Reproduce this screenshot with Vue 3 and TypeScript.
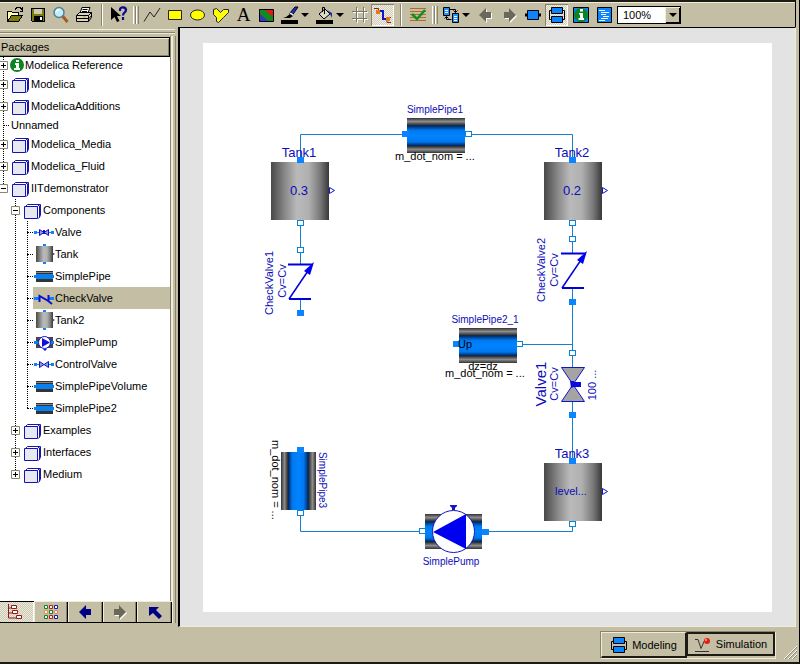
<script setup lang="ts">
import { computed, ref } from 'vue'

type IconKind = 'info' | 'folder' | 'valve' | 'tank' | 'pipe' | 'check' | 'pump' | 'control' | 'none'

interface TreeNode {
  id: string
  label: string
  icon: IconKind
  children?: TreeNode[]
}

interface TreeRow {
  node: TreeNode
  depth: number
  last: boolean
  guides: boolean[]
}

interface Label {
  text: string
  x: number
  y: number
  size?: number
  turn?: number
  anchor?: 'start' | 'middle'
  dark?: boolean
}

const packages: TreeNode[] = [
  { id: 'ref', label: 'Modelica Reference', icon: 'info', children: [] },
  { id: 'modelica', label: 'Modelica', icon: 'folder', children: [] },
  { id: 'additions', label: 'ModelicaAdditions', icon: 'folder', children: [] },
  { id: 'unnamed', label: 'Unnamed', icon: 'none' },
  { id: 'media', label: 'Modelica_Media', icon: 'folder', children: [] },
  { id: 'fluid', label: 'Modelica_Fluid', icon: 'folder', children: [] },
  {
    id: 'iit',
    label: 'IITdemonstrator',
    icon: 'folder',
    children: [
      {
        id: 'components',
        label: 'Components',
        icon: 'folder',
        children: [
          { id: 'valve', label: 'Valve', icon: 'valve' },
          { id: 'tank', label: 'Tank', icon: 'tank' },
          { id: 'pipe', label: 'SimplePipe', icon: 'pipe' },
          { id: 'check', label: 'CheckValve', icon: 'check' },
          { id: 'tank2', label: 'Tank2', icon: 'tank' },
          { id: 'pump', label: 'SimplePump', icon: 'pump' },
          { id: 'control', label: 'ControlValve', icon: 'control' },
          { id: 'volume', label: 'SimplePipeVolume', icon: 'pipe' },
          { id: 'pipe2', label: 'SimplePipe2', icon: 'pipe' },
        ],
      },
      { id: 'examples', label: 'Examples', icon: 'folder', children: [] },
      { id: 'interfaces', label: 'Interfaces', icon: 'folder', children: [] },
      { id: 'medium', label: 'Medium', icon: 'folder', children: [] },
    ],
  },
]

const open = ref<Set<string>>(new Set(['iit', 'components']))
const selected = ref('check')
const zoom = ref('100%')

function toggle(id: string) {
  const next = new Set(open.value)
  if (next.has(id)) next.delete(id)
  else next.add(id)
  open.value = next
}

function flatten(nodes: TreeNode[], depth: number, guides: boolean[]): TreeRow[] {
  return nodes.flatMap((node, i) => {
    const last = i === nodes.length - 1
    const row: TreeRow = { node, depth, last, guides }
    const kids = node.children && open.value.has(node.id) ? flatten(node.children, depth + 1, [...guides, !last]) : []
    return [row, ...kids]
  })
}

const rows = computed(() => flatten(packages, 0, []))

const labels: Label[] = [
  { text: 'SimplePipe1', x: 435, y: 113, size: 10 },
  { text: 'm_dot_nom = ...', x: 395, y: 160, anchor: 'start', dark: true },
  { text: 'Tank1', x: 299, y: 157, size: 13 },
  { text: '0.3', x: 299, y: 195, size: 13 },
  { text: 'CheckValve1', x: 273, y: 283, turn: -90 },
  { text: 'Cv=Cv', x: 286, y: 281, turn: -90 },
  { text: 'Tank2', x: 572, y: 157, size: 13 },
  { text: '0.2', x: 572, y: 195, size: 13 },
  { text: 'CheckValve2', x: 545, y: 270, turn: -90 },
  { text: 'Cv=Cv', x: 558, y: 270, turn: -90 },
  { text: 'SimplePipe2_1', x: 485, y: 323, size: 10 },
  { text: 'Up', x: 458, y: 348, anchor: 'start', dark: true },
  { text: 'dz=dz', x: 483, y: 370, dark: true },
  { text: 'm_dot_nom = ...', x: 445, y: 377, anchor: 'start', dark: true },
  { text: 'Valve1', x: 546, y: 384, size: 15, turn: -90 },
  { text: 'Cv=Cv', x: 558, y: 384, turn: -90 },
  { text: '100 ...', x: 596, y: 385, turn: -90 },
  { text: 'Tank3', x: 572, y: 458, size: 13 },
  { text: 'level...', x: 571, y: 495 },
  { text: 'SimplePump', x: 451, y: 565, size: 10 },
  { text: 'SimplePipe3', x: 319, y: 480, size: 10, turn: 90 },
  { text: 'm_dot_nom = ...', x: 272, y: 440, turn: 90, anchor: 'start', dark: true },
]

const tanks = [
  { x: 271, y: 162 },
  { x: 544, y: 162 },
  { x: 544, y: 463 },
]

const checkValves = [
  { x: 300, y: 264 },
  { x: 573, y: 253 },
]

const solidPorts = [
  [402, 131], [297, 157], [297, 310], [569, 157], [569, 299], [453, 341],
  [569, 412], [569, 458], [482, 529], [297, 447],
]

const hollowPorts = [
  [465, 131], [297, 220], [297, 247], [569, 220], [569, 236], [516, 341],
  [569, 350], [569, 521], [419, 528], [297, 510],
]
</script>

<template>
  <div class="app">
    <header class="toolbar">
      <button class="tool" aria-label="Open">
        <svg width="20" height="20" viewBox="0 0 20 20" shape-rendering="crispEdges">
          <path d="M2.500 16.500v-10h4l1 1h6v3" fill="#ffffb0" stroke="#000" />
          <path d="M2.500 16.500l4-6h11l-4 6z" fill="#7c7a10" stroke="#000" />
          <path d="M10 4.500l2-2h3l2 2M17.500 2v4h-3" fill="none" stroke="#000" />
        </svg>
      </button>
      <button class="tool" aria-label="Save">
        <svg width="20" height="20" viewBox="0 0 20 20" shape-rendering="crispEdges">
          <path d="M3.500 3.500h13v13H4.500l-1-1z" fill="#7c7a10" stroke="#000" />
          <path d="M6 4h8v5H6z" fill="#d0cbb5" /><path d="M6 11h9v5H6z" fill="#000" /><path d="M12 12h2v3h-2z" fill="#fff" />
        </svg>
      </button>
      <button class="tool" aria-label="Print preview">
        <svg width="20" height="20" viewBox="0 0 20 20">
          <path d="M11.500 11l5 6" stroke="#a65a20" stroke-width="3" />
          <circle cx="8" cy="7.500" r="5" fill="#c4ecfa" stroke="#4f8494" stroke-width="1.500" />
          <path d="M5.500 7a3 3 0 0 1 3-2.500" fill="none" stroke="#fff" stroke-width="1.500" />
        </svg>
      </button>
      <button class="tool" aria-label="Print">
        <svg width="20" height="20" viewBox="0 0 20 20">
          <path d="M6 8l2-5.500h8L14 8" fill="#fff" stroke="#000" />
          <path d="M8.500 4.500h5M8 6.500h5" stroke="#000" />
          <path d="M2.500 10.500l3-3h12v5l-3 4h-12z" fill="#d8d4c0" stroke="#000" />
          <path d="M2.500 10.500h12v6M14.500 10.500l3-3M3 13.500h11M14.500 14l3-3.500" fill="none" stroke="#000" />
          <path d="M9 12h3" stroke="#b0b000" />
        </svg>
      </button>
      <span class="sep"></span>
      <button class="tool" aria-label="Context help">
        <svg width="20" height="20" viewBox="0 0 20 20">
          <path d="M2 2v13l3.500-3 2.500 5 2.500-1-2.500-5h4z" fill="#000" />
          <path d="M11 6V4.500c0-3 6-3 6 .5 0 2.500-3 2.500-3 5.500M14 12v3" fill="none" stroke="#0a0a88" stroke-width="2.200" />
        </svg>
      </button>
      <span class="handle"></span>
      <button class="tool" aria-label="Line">
        <svg width="20" height="20" viewBox="0 0 20 20"><path d="M2 16.500L8 7l4 5 6-9" fill="none" stroke="#222" /></svg>
      </button>
      <button class="tool" aria-label="Rectangle">
        <svg width="20" height="20" viewBox="0 0 20 20"><path d="M3.500 5.500h13v9h-13z" fill="#ff0" stroke="#222" /></svg>
      </button>
      <button class="tool" aria-label="Ellipse">
        <svg width="20" height="20" viewBox="0 0 20 20"><ellipse cx="9.500" cy="10" rx="7" ry="5" fill="#ff0" stroke="#222" /></svg>
      </button>
      <button class="tool" aria-label="Polygon">
        <svg width="20" height="20" viewBox="0 0 20 20"><path d="M2.500 4.500l3-1 4 4 3-3h5v3l-5 5-5 5-2-1v-4l-3-3z" fill="#ff0" stroke="#222" /></svg>
      </button>
      <button class="tool letter">A</button>
      <button class="tool" aria-label="Bitmap">
        <svg width="20" height="20" viewBox="0 0 20 20">
          <path d="M2 4h14v12H2z" fill="#128a20" /><path d="M7 4h9v8z" fill="#e01818" /><path d="M2 8v8h9z" fill="#3038c0" />
          <path d="M2.500 4.500h14v12h-14z" fill="none" stroke="#000" />
        </svg>
      </button>
      <button class="tool" aria-label="Line colour">
        <svg width="20" height="20" viewBox="0 0 20 20">
          <path d="M1 15h17v4H1z" fill="#000" /><path d="M3 13l3-1 4-3 3 2-3 2H3z" fill="#000" />
          <path d="M9.500 8.500L15 2l3 0-5.500 8z" fill="#2630c8" stroke="#000" /><path d="M10 8l3 2" stroke="#fff" stroke-width="1.500" />
        </svg>
      </button>
      <button class="drop" aria-label="Line colour options"><i></i></button>
      <button class="tool" aria-label="Fill colour">
        <svg width="20" height="20" viewBox="0 0 20 20">
          <path d="M1 15h17v4H1z" fill="#000" />
          <path d="M4 9l6-5 5 5-6 5z" fill="#dcd8c8" stroke="#000" /><path d="M9.500 9V2.500h-2V7" fill="none" stroke="#000" />
          <path d="M12 5l5 3v5l-2-4z" fill="#2028a8" />
        </svg>
      </button>
      <button class="drop" aria-label="Fill colour options"><i></i></button>
      <button class="tool" aria-label="Grid">
        <svg width="20" height="20" viewBox="0 0 20 20" fill="none">
          <path d="M7.500 3v15M14.500 3v15M3 7.500h15M3 14.500h15" stroke="#fff" />
          <path d="M6.500 2v15M13.500 2v15M2 6.500h15M2 13.500h15" stroke="#77745f" />
        </svg>
      </button>
      <button class="tool pressed" aria-label="Connect" aria-pressed="true">
        <svg width="20" height="20" viewBox="0 0 20 20">
          <path d="M5 6h5v8h5" fill="none" stroke="#1414c8" stroke-width="2" />
          <path d="M1 3.500h4.500v5M18 17.500h-4v-5h4" fill="none" stroke="#8c2410" /><path d="M3 5h4v4H3zM13 12h4v4h-4z" fill="#e8781c" />
        </svg>
      </button>
      <span class="sep"></span>
      <button class="tool" aria-label="Check model">
        <svg width="20" height="20" viewBox="0 0 20 20">
          <path d="M2 3.500h16M2 6.500h16M2 9.500h16M2 12.500h16M2 15.500h16" stroke="#b06a2c" /><path d="M4 9l5 5 8-9" fill="none" stroke="#129018" stroke-width="2.500" />
        </svg>
      </button>
      <span class="handle"></span>
      <button class="tool" aria-label="Switch model">
        <svg width="20" height="20" viewBox="0 0 20 20">
          <path d="M2.500 2.500h6v8h-6zM11.500 8.500h6v9h-6z" fill="#1e90ff" stroke="#000" />
          <path d="M4 5.500h3M4 7.500h3M13 11.500h3M13 13.500h3M13 15.500h3" stroke="#fff" />
          <path d="M9 4.500h5.500v3M12.500 5.500l2 2 2-2M10.500 14.500h-5v-3M3.500 13.500l2-2 2 2" fill="none" stroke="#000" />
        </svg>
      </button>
      <button class="drop" aria-label="Switch model options"><i></i></button>
      <button class="tool" aria-label="Back">
        <svg width="20" height="20" viewBox="0 0 20 20"><path d="M4 11l7-7v4h5v6h-5v4z" fill="#fff" /><path d="M3 10l7-7v4h5v6h-5v4z" fill="#6a6858" /></svg>
      </button>
      <button class="tool" aria-label="Forward">
        <svg width="20" height="20" viewBox="0 0 20 20"><path d="M18 11l-7-7v4H6v6h5v4z" fill="#fff" /><path d="M17 10l-7-7v4H5v6h5v4z" fill="#6a6858" /></svg>
      </button>
      <div class="views">
        <button class="tool" aria-label="Icon view">
          <svg width="20" height="20" viewBox="0 0 20 20"><path d="M2 10h16" stroke="#000" stroke-width="3" /><path d="M4.500 5.500h11v9h-11z" fill="#0a84ff" stroke="#000" /></svg>
        </button>
        <button class="tool pressed" aria-label="Diagram view" aria-pressed="true">
          <svg width="20" height="20" viewBox="0 0 20 20">
            <path d="M2.500 5.500h15v9h-15z" fill="none" stroke="#000" /><path d="M4.500 2.500h11v6h-11zM4.500 11.500h11v6h-11z" fill="#0a84ff" stroke="#000" />
          </svg>
        </button>
        <button class="tool" aria-label="Documentation">
          <svg width="20" height="20" viewBox="0 0 20 20">
            <path d="M2.500 2.500h15v15h-15z" fill="#0a84ff" stroke="#000" /><circle cx="10" cy="10" r="7" fill="#0c8420" />
            <path d="M9 4h3v2.500H9zM8 8h4v5h1v2H7.500v-2H9v-3.500H8z" fill="#fff" />
          </svg>
        </button>
        <button class="tool" aria-label="Source text">
          <svg width="20" height="20" viewBox="0 0 20 20">
            <path d="M2.500 2.500h14v15h-14z" fill="#0a84ff" stroke="#000" /><path d="M4 5.500h6M6 7.500h8M6 9.500h5M8 11.500h6M6 13.500h7M4 15.500h6" stroke="#fff" />
          </svg>
        </button>
      </div>
      <label class="combo">
        <select v-model="zoom" aria-label="Zoom">
          <option>50%</option>
          <option>100%</option>
          <option>200%</option>
        </select>
        <span class="combo-btn"><i></i></span>
      </label>
    </header>

    <main class="main">
      <aside class="side">
        <div class="grip"></div>
        <div class="side-body">
          <h2 class="title">Packages</h2>
          <ul class="tree" role="tree">
            <li
              v-for="row in rows"
              :key="row.node.id"
              class="row"
              :class="{ short: row.node.icon === 'none' || row.node.icon === 'info' }"
              role="treeitem"
              :aria-selected="selected === row.node.id"
            >
              <span v-for="(g, i) in row.guides" :key="i" class="guide" :class="{ line: g }"></span>
              <span class="slot" :class="{ last: row.last }">
                <button v-if="row.node.children" class="toggle" :aria-label="'Toggle ' + row.node.label" @click="toggle(row.node.id)">
                  <svg width="9" height="9" viewBox="0 0 9 9">
                    <path d="M.500.500h8v8h-8z" fill="#fff" stroke="#8a8770" />
                    <path d="M2 4.500h5" stroke="#000" /><path v-if="!open.has(row.node.id)" d="M4.500 2v5" stroke="#000" />
                  </svg>
                </button>
                <span v-else class="stub"></span>
              </span>
              <button class="item" :class="{ on: selected === row.node.id }" @click="selected = row.node.id">
                <svg v-if="row.node.icon === 'info'" class="ic" width="16" height="14" viewBox="0 0 16 14">
                  <circle cx="8" cy="7" r="7" fill="#0c8420" /><path d="M7 2h3v2H7zM6 5h4v5h1v2H5v-2h2V7H6z" fill="#fff" />
                </svg>
                <svg v-else-if="row.node.icon === 'folder'" class="ic" width="22" height="20" viewBox="0 0 22 20">
                  <path d="M3.500 7.500l3-3h13v11l-2 3" fill="#fff" stroke="#1414b4" /><path d="M3.500 6.500h13v12h-13z" fill="#e8e8f0" stroke="#1414b4" /><path d="M16.500 6.500l2-2M18.500 5.500v12" stroke="#1414b4" />
                </svg>
                <svg v-else-if="row.node.icon !== 'none'" class="ic" width="22" height="20" viewBox="0 0 22 20">
                  <template v-if="row.node.icon === 'tank'">
                    <path d="M3 2h17v16H3z" fill="url(#metal-h)" /><path d="M10 0h3v2h-3zM10 18h3v2h-3z" fill="#0a84ff" /><path d="M20 9l2 1-2 1z" fill="#11c" />
                  </template>
                  <template v-else-if="row.node.icon === 'pipe'">
                    <path d="M3 5h17v11H3z" fill="#333" /><path d="M3 6h17v1H3z" fill="#888" /><path d="M1 9h2v-1h17v1h1v3h-1v1H3v-1H1z" fill="#0880f0" />
                  </template>
                  <template v-else-if="row.node.icon === 'pump'">
                    <path d="M3 5h17v11H3z" fill="#445" /><path d="M1 9h20v3H1z" fill="#0880f0" />
                    <circle cx="11.500" cy="10.500" r="6" fill="#fff" stroke="#11c" /><path d="M9 6v9l8-4.500zM10 17h4l-2 2z" fill="#11d" />
                  </template>
                  <template v-else-if="row.node.icon === 'check'">
                    <path d="M1 10.500h5M16 10.500h5" stroke="#0a84ff" stroke-width="3" /><path d="M6.500 14V8l9 5V7M14 12l5 4" fill="none" stroke="#11c" stroke-width="2" />
                  </template>
                  <template v-else>
                    <path d="M1 10.500h20" stroke="#0a84ff" /><path d="M1 9h3v3H1zM18 9h3v3h-3z" fill="#0a84ff" />
                    <path d="M6.500 7.500l9 6v-6l-9 6z" fill="#99c" stroke="#11c" /><path v-if="row.node.icon === 'control'" d="M9 7h4l-2 3z" fill="#fff" />
                    <path v-else d="M10 8h2v4h-2z" fill="#11c" />
                  </template>
                </svg>
                <span>{{ row.node.label }}</span>
              </button>
            </li>
          </ul>
          <div class="side-tabs">
            <button class="pressed-tab" aria-label="Tree view">
              <svg width="16" height="16" viewBox="0 0 16 16" fill="#fff" stroke="#901818">
                <path d="M1.500 0v14h8M1.500 4h3M1.500 9h4" fill="none" /><path d="M4.500 1.500h5v3h-5zM5.500 6.500h5v3h-5zM9.500 11.500h5v3h-5z" />
              </svg>
            </button>
            <button aria-label="Icon grid">
              <svg width="16" height="16" viewBox="0 0 16 16" fill="#fff">
                <path d="M1.500 1.500h3v3h-3zM6.500 6.500h3v3h-3zM1.500 11.500h3v3h-3z" stroke="#0c8420" /><path d="M6.500 1.500h3v3h-3zM6.500 11.500h3v3h-3z" stroke="#c01818" />
                <path d="M11.500 1.500h3v3h-3zM11.500 11.500h3v3h-3z" stroke="#1818b0" /><path d="M1.500 6.500h3v3h-3zM11.500 6.500h3v3h-3z" stroke="#f08850" />
              </svg>
            </button>
            <button aria-label="Previous"><svg width="16" height="16" viewBox="0 0 16 16"><path d="M1 8l7-7v4h5v6H8v4z" fill="#000084" /></svg></button>
            <button aria-label="Next">
              <svg width="16" height="16" viewBox="0 0 16 16"><path d="M15 9L8 2v4H3v6h5v4z" fill="#fff" /><path d="M14 8L7 1v4H2v6h5v4z" fill="#6a6858" /></svg>
            </button>
            <button aria-label="Up"><svg width="16" height="16" viewBox="0 0 16 16"><path d="M2 3h10L9 6l6 6-3 3-6-6-4 3z" fill="#000084" /></svg></button>
          </div>
        </div>
      </aside>

      <section class="work">
        <div class="sheet">
          <svg class="diagram" viewBox="203 43 569 569" role="img" aria-label="Fluid network diagram">
            <defs>
              <linearGradient id="metal-h">
                <stop offset="0" stop-color="#484848" /><stop offset=".25" stop-color="#8c8c8c" /><stop offset=".45" stop-color="#bababa" />
                <stop offset=".65" stop-color="#b0b0b0" /><stop offset=".85" stop-color="#787878" /><stop offset="1" stop-color="#383838" />
              </linearGradient>
              <linearGradient id="metal-v" x2="0" y2="1">
                <stop offset="0" stop-color="#333" /><stop offset=".1" stop-color="#8c8c8c" /><stop offset=".2" stop-color="#333" />
                <stop offset=".22" stop-color="#002860" /><stop offset=".35" stop-color="#0078f0" /><stop offset=".5" stop-color="#0084ff" /><stop offset=".68" stop-color="#0078f0" />
                <stop offset=".79" stop-color="#002860" /><stop offset=".81" stop-color="#333" /><stop offset=".9" stop-color="#8c8c8c" /><stop offset="1" stop-color="#333" />
              </linearGradient>
            </defs>

            <path
              class="wire"
              d="M300.500 160V134.500H405M470 134.500H572.500V160M300.500 224V312M572.500 224V461M520 344.500H572.500M300.500 514V531.500H421M486 531.500H572.500V524"
            />

            <g v-for="(t, i) in tanks" :key="'t' + i" :transform="`translate(${t.x} ${t.y})`">
              <path d="M0 0h58v58H0z" fill="url(#metal-h)" />
              <path d="M58.500 25.500l5 3-5 3z" fill="#fff" stroke="#1414c8" />
            </g>

            <g v-for="(v, i) in checkValves" :key="'c' + i" :transform="`translate(${v.x} ${v.y})`">
              <path d="M-11 1v33h25V1z" fill="#fff" />
              <path d="M-12 .500h25M-11 35h22" stroke="#0000d8" stroke-width="2" />
              <path d="M-11 35L12 1" stroke="#0000d8" stroke-width="1.500" />
              <path d="M14-2L4 7l6 4z" fill="#0000f0" />
            </g>

            <path d="M407 118h58v35h-58z" fill="url(#metal-v)" />
            <path d="M459 328h58v35h-58z" fill="url(#metal-v)" />
            <path d="M0 0h58v35H0z" fill="url(#metal-v)" transform="translate(316 452) rotate(90)" />

            <path d="M561.500 367.500h23l-11.500 17 11.500 17h-23l11.500-17z" fill="#a4a4a4" stroke="#1414c8" />
            <path d="M570 381h4v1h7v5h-7l-3 1z" fill="#0a0ae0" />

            <path d="M425 514h57v35h-57z" fill="url(#metal-v)" />
            <circle cx="453.500" cy="531.500" r="21" fill="#fff" stroke="#1414c8" />
            <path d="M433 532l33-18v35z" fill="#0000f0" />
            <path d="M450 505h7v1l-2 2v2h-3v-2l-2-2z" fill="#1414c8" />

            <rect v-for="(p, i) in solidPorts" :key="'s' + i" :x="p[0]" :y="p[1]" width="7" height="6" fill="#0a84ff" />
            <rect v-for="(p, i) in hollowPorts" :key="'h' + i" class="hollow" :x="p[0] + 0.5" :y="p[1] + 0.5" width="6" height="5" />

            <text
              v-for="(l, i) in labels"
              :key="'l' + i"
              :transform="`translate(${l.x} ${l.y}) rotate(${l.turn ?? 0})`"
              :text-anchor="l.anchor ?? 'middle'"
              :font-size="l.size ?? 11"
              :fill="l.dark ? '#000' : '#0c0cb8'"
            >{{ l.text }}</text>
          </svg>
        </div>
      </section>
    </main>

    <footer class="status">
      <div class="modes">
        <button class="mode active">
          <svg width="18" height="18" viewBox="0 0 18 18">
            <path d="M1.500 5.500h15v8h-15z" fill="none" stroke="#000" /><path d="M3.500 1.500h11v6h-11zM3.500 10.500h11v6h-11z" fill="#0a84ff" stroke="#000" />
          </svg>
          Modeling
        </button>
        <button class="mode">
          <svg width="18" height="18" viewBox="0 0 18 18">
            <path d="M1 4.500h3l3 9 3-7 2-2M1 16.500h14" fill="none" stroke="#333" /><circle cx="13" cy="6" r="3" fill="#e81c10" /><circle cx="12" cy="5" r="1" fill="#ffb0a0" />
          </svg>
          Simulation
        </button>
      </div>
      <svg class="sizer" width="14" height="14" viewBox="0 0 14 14">
        <path d="M1 14L14 1M5 14l9-9M9 14l5-5" stroke="#fff" /><path d="M2 14L14 2M6 14l8-8M10 14l4-4" stroke="#8a8670" />
      </svg>
    </footer>
  </div>
</template>

<style>
body {
  margin: 0;
  background: #c3bea4;
}
</style>

<style scoped>
.app {
  --face: #c3bea4;
  --lite: #efecdc;
  --dark: #88846c;
  box-sizing: border-box;
  min-height: 100vh;
  display: flex;
  flex-direction: column;
  border-right: 1px solid #000;
  border-bottom: 2px solid #1c1b14;
  background: var(--face);
  font: 11px/14px "Liberation Sans", Arial, sans-serif;
  color: #000;
}
button {
  font: inherit;
  color: inherit;
  margin: 0;
  padding: 0;
  border: 0;
  background: none;
}
svg {
  display: block;
}
.toolbar {
  display: flex;
  align-items: center;
  height: 25px;
  padding: 0 3px;
  margin-right: 3px;
  border-top: 2px solid #1c1b14;
  border-right: 1px solid #000;
  box-shadow: inset 0 1px var(--lite);
}
.tool {
  flex: none;
  display: flex;
  align-items: center;
  justify-content: center;
  width: 23px;
  height: 22px;
}
.letter {
  font: 19px/20px "Liberation Serif", serif;
}
.pressed {
  background: repeating-conic-gradient(#f2f0e6 0 25%, #d0ccb8 0 50%) 0 0 / 2px 2px;
  box-shadow: inset 1px 1px var(--dark), inset -1px -1px #fff;
}
.drop {
  width: 12px;
  height: 22px;
}
.drop i,
.combo-btn i {
  display: block;
  width: 0;
  border: 4px solid transparent;
  border-top-color: #000;
  border-bottom: 0;
}
.sep {
  width: 12px;
  height: 22px;
  background: linear-gradient(90deg, var(--dark) 50%, #fff 50%) 6px 0 / 2px 100% no-repeat;
}
.handle {
  width: 10px;
  height: 18px;
  background: repeating-linear-gradient(90deg, #fff 0 1px, var(--face) 1px 2px, var(--dark) 2px 3px) 3px 0 / 6px 100% no-repeat;
}
.views {
  display: flex;
  gap: 1px;
  padding: 0 1px;
}
.combo {
  display: flex;
  width: 64px;
  height: 18px;
  box-sizing: border-box;
  border: 1px solid #000;
  background: #fff;
}
.combo select {
  flex: 1;
  min-width: 0;
  appearance: none;
  border: 0;
  padding: 0 0 0 5px;
  background: none;
  font: inherit;
  color: inherit;
  outline: 0;
}
.combo-btn {
  display: flex;
  align-items: center;
  justify-content: center;
  width: 15px;
  background: var(--face);
  box-shadow: inset 1px 1px var(--lite), inset -1px -1px #000;
}
.main {
  flex: 1;
  display: flex;
}
.side {
  flex: none;
  width: 178px;
  display: flex;
  flex-direction: column;
  padding-bottom: 4px;
}
.grip {
  height: 7px;
  margin: 2px 3px 0 0;
  background: repeating-linear-gradient(var(--lite) 0 1px, var(--face) 1px 3px, var(--dark) 3px 4px);
}
.side-body {
  flex: 1;
  display: flex;
  flex-direction: column;
  margin-right: 2px;
  padding-right: 6px;
  background: linear-gradient(90deg, var(--dark) 1px, var(--lite) 1px 3px, var(--face) 3px 5px, var(--dark) 5px) right / 6px 100% no-repeat;
}
.title {
  margin: 1px 0 0;
  padding: 2px 1px;
  border: 1px solid #000;
  border-left: 0;
  box-shadow: inset 0 1px var(--lite), inset -1px -1px var(--dark);
  font: inherit;
}
.tree {
  flex: 1;
  margin: 0;
  padding: 0;
  list-style: none;
  background: #fff;
}
.row {
  display: flex;
  height: 22px;
}
.row.short {
  height: 16px;
}
.guide {
  width: 12px;
}
.guide.line,
.slot {
  background: repeating-linear-gradient(#000 0 1px, transparent 1px 2px) 3px 0 / 1px 100% no-repeat;
}
.slot {
  display: flex;
  align-items: center;
  width: 9px;
}
.slot.last {
  background-size: 1px 50%;
}
.toggle {
  margin-left: -1px;
}
.stub {
  width: 6px;
  margin-left: 3px;
  border-top: 1px dotted #000;
}
.item {
  flex: 1;
  display: flex;
  align-items: center;
  text-align: left;
  white-space: nowrap;
}
.item > span:first-child {
  padding-left: 2px;
}
.item.on {
  background: var(--face);
}
.ic {
  flex: none;
}
.side-tabs {
  display: flex;
  height: 21px;
  margin-right: -2px;
  border-bottom: 1px solid #000;
}
.side-tabs button {
  flex: 7;
  display: flex;
  align-items: center;
  justify-content: center;
  background: var(--face);
  box-shadow: inset 1px 1px var(--lite), inset -1px 0 #000, inset -2px 0 var(--dark);
}
.side-tabs .pressed-tab {
  flex: 6;
  padding-right: 4px;
  background: repeating-conic-gradient(#eceade 0 25%, #ccc8b2 0 50%) 0 0 / 2px 2px;
  box-shadow: inset 0 1px #000, inset -1px 0 #fff;
}
.work {
  flex: 1;
  min-width: 0;
  margin-right: 3px;
  padding: 15px 23px 13px;
  border-left: 2px solid #000;
  border-top: 1px solid #000;
  border-right: 1px solid var(--lite);
  border-bottom: 1px solid var(--lite);
  background: #e3e3e3;
}
.sheet {
  background: #fff;
}
.diagram {
  width: 100%;
  height: auto;
  font-family: "Liberation Sans", Arial, sans-serif;
}
.wire {
  fill: none;
  stroke: #1580d0;
}
.hollow {
  fill: #fff;
  stroke: #0a84d8;
}
.status {
  display: flex;
  justify-content: flex-end;
  align-items: flex-start;
  padding: 4px 2px 3px;
}
.modes {
  display: flex;
  align-items: flex-start;
  border: 1px solid var(--dark);
  border-right-color: var(--lite);
  border-bottom-color: var(--lite);
}
.mode {
  box-sizing: border-box;
  display: flex;
  align-items: center;
  justify-content: center;
  gap: 4px;
  width: 88px;
  height: 24px;
  border: solid #1c1b14;
  border-width: 2px 2px 2px 1px;
}
.mode.active {
  width: 86px;
  height: 26px;
  border-width: 1px 2px 2px 1px;
  border-top-color: var(--lite);
  border-left-color: var(--lite);
}
.sizer {
  align-self: flex-end;
  margin-left: 7px;
}
</style>
